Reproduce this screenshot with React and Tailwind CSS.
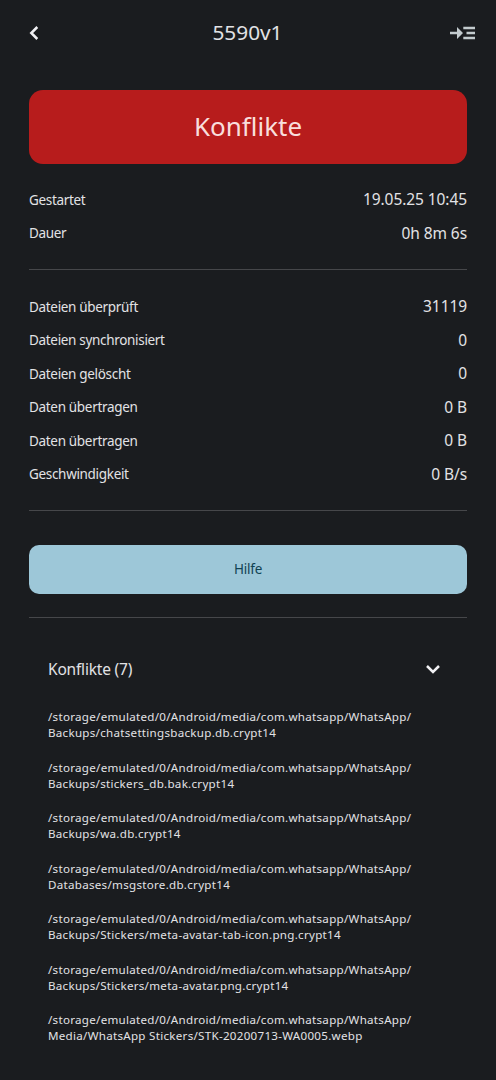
const timing = [
  ['Gestartet', '19.05.25 10:45'],
  ['Dauer', '0h 8m 6s'],
];

const stats = [
  ['Dateien überprüft', '31119'],
  ['Dateien synchronisiert', '0'],
  ['Dateien gelöscht', '0'],
  ['Daten übertragen', '0 B'],
  ['Daten übertragen', '0 B'],
  ['Geschwindigkeit', '0 B/s'],
];

const BASE = '/storage/emulated/0/Android/media/com.whatsapp/WhatsApp/';

const conflicts = [
  'Backups/chatsettingsbackup.db.crypt14',
  'Backups/stickers_db.bak.crypt14',
  'Backups/wa.db.crypt14',
  'Databases/msgstore.db.crypt14',
  'Backups/Stickers/meta-avatar-tab-icon.png.crypt14',
  'Backups/Stickers/meta-avatar.png.crypt14',
  'Media/WhatsApp Stickers/STK-20200713-WA0005.webp',
];

function StatRows({ rows }) {
  return (
    <dl>
      {rows.map(([label, value], i) => (
        <div key={i} className="flex h-[33.5px] items-center justify-between">
          <dt className="text-[13.5px] tracking-[-0.32px]">{label}</dt>
          <dd className="text-[15.5px] tracking-[-0.08px]">{value}</dd>
        </div>
      ))}
    </dl>
  );
}

export default function App() {
  return (
    <div className="h-[1080px] w-[496px] overflow-hidden bg-[#1a1c1f] font-['Noto_Sans',sans-serif] text-[#e2e2e5]">
      <header className="flex h-[66px] items-center justify-between pr-[21px] pl-[29px]">
        <button className="w-[26px]">
          <svg width="10" height="14" viewBox="0 0 10 14" fill="none" stroke="#f1f1f4" strokeWidth="2.5">
            <path d="M8.3 1L2.3 7l6 6" />
          </svg>
        </button>
        <h1 className="-ml-[10px] text-[20.8px]">5590v1</h1>
        <button className="text-[#c3cbce]">
          <svg width="25" height="14" viewBox="0 0 25 14" fill="currentColor">
            <path d="M0 5.800h7V1l6 6-6 6V8.200H0zM13.300 0.800h11.700v2.400H13.300zM16.500 5.800H25v2.400h-8.500zM13.300 10.800h11.700v2.400H13.300z" />
          </svg>
        </button>
      </header>

      <main className="px-[29px] pt-[24px]">
        <div className="flex h-[74px] items-center justify-center rounded-[14px] bg-[#b71c1c] pb-[2px] text-[26px] text-[#f9dedc]">Konflikte</div>

        <div className="mt-[19px]"><StatRows rows={timing} /></div>
        <hr className="mt-[19px] mb-[20px] border-[#46474a]" />
        <StatRows rows={stats} />
        <hr className="mt-[19px] border-[#46474a]" />

        <button className="mt-[34px] h-[49px] w-full rounded-[10px] bg-[#9dc7d8] text-[13.5px] tracking-[-0.2px] text-[#114353]">Hilfe</button>
        <hr className="mt-[23px] border-[#46474a]" />

        {/* Conflict list */}
        <section className="px-[19px] pt-[36px]">
          <div className="flex h-[30px] items-center justify-between pr-1">
            <h2 className="pt-[2px] text-[15.5px] tracking-[-0.2px]">Konflikte (7)</h2>
            <svg width="16" height="10" viewBox="0 0 16 10" fill="none" stroke="#f1f1f4" strokeWidth="2.5" className="mr-[3px]">
              <path d="M2 2l6 6 6-6" />
            </svg>
          </div>
          <ul className="mt-[25px] flex flex-col gap-[18.5px] text-[11.6px] leading-[16px] tracking-[0.28px]">
            {conflicts.map((file) => (
              <li key={file}>{BASE}<br />{file}</li>
            ))}
          </ul>
        </section>
      </main>
    </div>
  );
}
